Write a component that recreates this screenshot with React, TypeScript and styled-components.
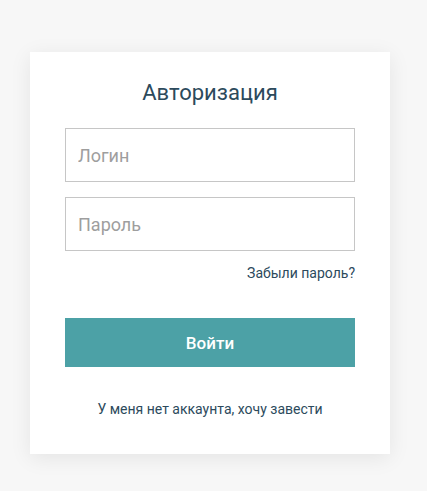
import React from "react";
import styled, { createGlobalStyle } from "styled-components";

const GlobalStyle = createGlobalStyle`
  html, body {
    margin: 0;
    padding: 0;
    background-color: #f7f7f7;
    font-family: Roboto, "Liberation Sans", sans-serif;
  }
`;

const Page = styled.div`
  display: flex;
  align-items: flex-start;
  padding: 52px 0 0 30px;
  min-height: 491px;
  box-sizing: border-box;
`;

const Card = styled.form`
  width: 360px;
  box-sizing: border-box;
  padding: 28px 35px 36px;
  background-color: #fff;
  box-shadow: 0 4px 20px rgba(0, 0, 0, 0.08);
  display: flex;
  flex-direction: column;
`;

const Title = styled.h2`
  margin: 0 0 22px;
  font-size: 22px;
  line-height: 26px;
  font-weight: 400;
  text-align: center;
  color: #2c4a5c;
`;

const Field = styled.input`
  height: 54px;
  box-sizing: border-box;
  padding: 0 12px;
  border: 1px solid #c6c6c6;
  font-family: inherit;
  font-size: 18px;
  color: #333;
  outline: none;
  & + & {
    margin-top: 15px;
  }
  &::placeholder {
    color: #9e9e9e;
  }
`;

const Forgot = styled.a`
  align-self: flex-end;
  margin-top: 14px;
  font-size: 14px;
  line-height: 17px;
  color: #2c4a5c;
  text-decoration: none;
  cursor: pointer;
`;

const Submit = styled.button`
  margin-top: 36px;
  height: 49px;
  border: none;
  background-color: #4ca1a6;
  color: #fff;
  font-family: inherit;
  font-size: 17px;
  font-weight: 500;
  cursor: pointer;
`;

const Register = styled.a`
  margin-top: 34px;
  text-align: center;
  font-size: 14px;
  line-height: 17px;
  color: #2c4a5c;
  text-decoration: none;
  cursor: pointer;
`;

const App = () => {
  return (
    <>
      <GlobalStyle />
      <Page>
        <Card onSubmit={(e) => e.preventDefault()}>
          <Title>Авторизация</Title>
          <Field type="text" placeholder="Логин" />
          <Field type="password" placeholder="Пароль" />
          <Forgot>Забыли пароль?</Forgot>
          <Submit type="submit">Войти</Submit>
          <Register>У меня нет аккаунта, хочу завести</Register>
        </Card>
      </Page>
    </>
  );
};

export default App;
